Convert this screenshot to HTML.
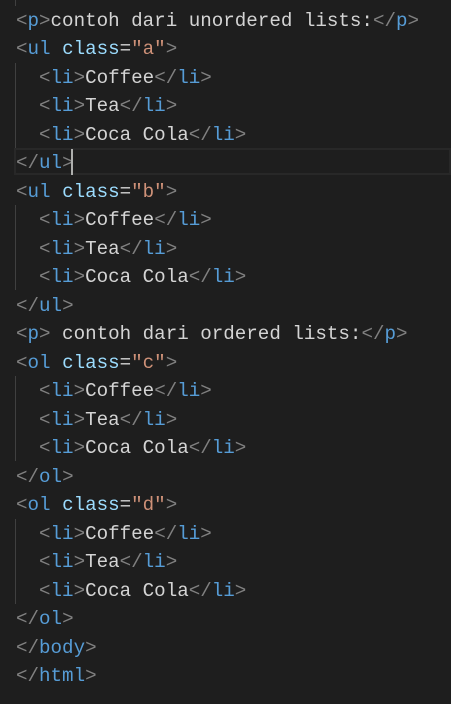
<!DOCTYPE html><html><head><style>
body{margin:0;background:#1e1e1e;width:451px;height:704px;overflow:hidden;position:relative}
.c{position:absolute;top:7px;left:16px;font-family:"Liberation Mono",monospace;font-size:19.2px;line-height:28.48px;color:#d4d4d4;white-space:pre}
.g{color:#808080}.t{color:#569cd6}.a{color:#9cdcfe}.s{color:#ce9178}
.hl{position:absolute;left:14px;right:0;top:148px;height:27px;border:2px solid #282828;box-sizing:border-box}
.cur{position:absolute;left:71px;top:149px;width:2px;height:26px;background:#aeafad}
.ig{position:absolute;left:15px;width:1px;background:#404040}
</style></head><body>
<div class="hl"></div>
<div class="ig" style="top:63px;height:85px"></div>
<div class="ig" style="top:205px;height:85px"></div>
<div class="ig" style="top:376px;height:85px"></div>
<div class="ig" style="top:519px;height:85px"></div>
<div class="ig" style="top:0;height:6px"></div>
<div class="c"><span class="g">&lt;</span><span class="t">p</span><span class="g">&gt;</span>contoh dari unordered lists:<span class="g">&lt;/</span><span class="t">p</span><span class="g">&gt;</span>
<span class="g">&lt;</span><span class="t">ul</span> <span class="a">class</span>=<span class="s">"a"</span><span class="g">&gt;</span>
  <span class="g">&lt;</span><span class="t">li</span><span class="g">&gt;</span>Coffee<span class="g">&lt;/</span><span class="t">li</span><span class="g">&gt;</span>
  <span class="g">&lt;</span><span class="t">li</span><span class="g">&gt;</span>Tea<span class="g">&lt;/</span><span class="t">li</span><span class="g">&gt;</span>
  <span class="g">&lt;</span><span class="t">li</span><span class="g">&gt;</span>Coca Cola<span class="g">&lt;/</span><span class="t">li</span><span class="g">&gt;</span>
<span class="g">&lt;/</span><span class="t">ul</span><span class="g">&gt;</span>
<span class="g">&lt;</span><span class="t">ul</span> <span class="a">class</span>=<span class="s">"b"</span><span class="g">&gt;</span>
  <span class="g">&lt;</span><span class="t">li</span><span class="g">&gt;</span>Coffee<span class="g">&lt;/</span><span class="t">li</span><span class="g">&gt;</span>
  <span class="g">&lt;</span><span class="t">li</span><span class="g">&gt;</span>Tea<span class="g">&lt;/</span><span class="t">li</span><span class="g">&gt;</span>
  <span class="g">&lt;</span><span class="t">li</span><span class="g">&gt;</span>Coca Cola<span class="g">&lt;/</span><span class="t">li</span><span class="g">&gt;</span>
<span class="g">&lt;/</span><span class="t">ul</span><span class="g">&gt;</span>
<span class="g">&lt;</span><span class="t">p</span><span class="g">&gt;</span> contoh dari ordered lists:<span class="g">&lt;/</span><span class="t">p</span><span class="g">&gt;</span>
<span class="g">&lt;</span><span class="t">ol</span> <span class="a">class</span>=<span class="s">"c"</span><span class="g">&gt;</span>
  <span class="g">&lt;</span><span class="t">li</span><span class="g">&gt;</span>Coffee<span class="g">&lt;/</span><span class="t">li</span><span class="g">&gt;</span>
  <span class="g">&lt;</span><span class="t">li</span><span class="g">&gt;</span>Tea<span class="g">&lt;/</span><span class="t">li</span><span class="g">&gt;</span>
  <span class="g">&lt;</span><span class="t">li</span><span class="g">&gt;</span>Coca Cola<span class="g">&lt;/</span><span class="t">li</span><span class="g">&gt;</span>
<span class="g">&lt;/</span><span class="t">ol</span><span class="g">&gt;</span>
<span class="g">&lt;</span><span class="t">ol</span> <span class="a">class</span>=<span class="s">"d"</span><span class="g">&gt;</span>
  <span class="g">&lt;</span><span class="t">li</span><span class="g">&gt;</span>Coffee<span class="g">&lt;/</span><span class="t">li</span><span class="g">&gt;</span>
  <span class="g">&lt;</span><span class="t">li</span><span class="g">&gt;</span>Tea<span class="g">&lt;/</span><span class="t">li</span><span class="g">&gt;</span>
  <span class="g">&lt;</span><span class="t">li</span><span class="g">&gt;</span>Coca Cola<span class="g">&lt;/</span><span class="t">li</span><span class="g">&gt;</span>
<span class="g">&lt;/</span><span class="t">ol</span><span class="g">&gt;</span>
<span class="g">&lt;/</span><span class="t">body</span><span class="g">&gt;</span>
<span class="g">&lt;/</span><span class="t">html</span><span class="g">&gt;</span></div>
<div class="cur"></div>
</body></html>
